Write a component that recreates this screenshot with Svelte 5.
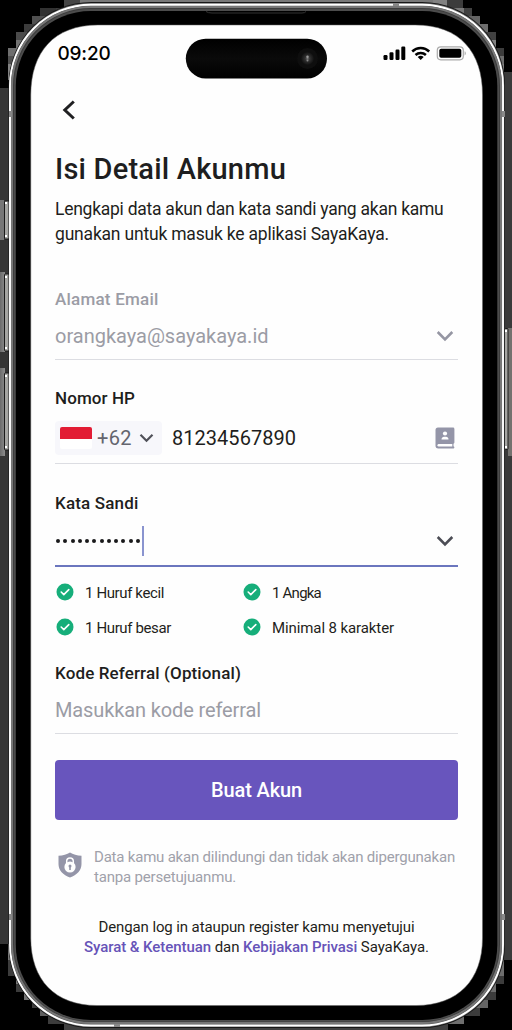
<script>
  // Tracks a line of text so that it fills the given measure.
  function measure(node, width) {
    const natural = node.getBoundingClientRect().width;
    const count = node.textContent.trim().length;
    node.style.letterSpacing = `${(width - natural) / count}px`;
  }

  const rules = [
    { text: '1 Huruf kecil', width: 79 },
    { text: '1 Angka', width: 49 },
    { text: '1 Huruf besar', width: 86 },
    { text: 'Minimal 8 karakter', width: 122 }
  ];

  // Stepped shading around the rounded case: x, y, width, height, grey level.
  const blocks = [
    [64, 0, 384, 8, 120], [56, 8, 16, 8, 60], [40, 8, 16, 8, 50], [64, 0, 16, 8, 70],
    [32, 16, 16, 8, 80], [24, 24, 16, 8, 60], [16, 32, 16, 8, 75], [16, 40, 8, 8, 115],
    [8, 48, 16, 8, 110], [8, 56, 8, 16, 80], [8, 64, 4, 16, 130],
    [433, 0, 14, 8, 130], [447, 0, 16, 8, 60], [448, 8, 16, 8, 120], [464, 8, 8, 8, 65],
    [464, 16, 16, 8, 100], [472, 24, 16, 8, 110], [480, 32, 16, 8, 65], [488, 40, 8, 8, 130],
    [488, 48, 16, 8, 60], [496, 56, 8, 16, 110], [500, 64, 4, 8, 130],
    [0, 88, 14, 856, 53], [500, 72, 12, 888, 58],
    [8, 944, 8, 16, 120], [8, 960, 8, 16, 60], [16, 968, 8, 16, 120], [16, 984, 16, 8, 60],
    [24, 992, 16, 8, 115], [32, 1000, 16, 8, 60], [40, 1008, 16, 8, 95], [48, 1016, 16, 8, 60],
    [64, 1022, 384, 8, 65],
    [496, 960, 8, 16, 110], [496, 976, 8, 8, 60], [488, 976, 8, 16, 110], [480, 992, 16, 8, 60],
    [472, 1000, 16, 8, 100], [464, 1008, 16, 8, 60], [448, 1016, 16, 8, 110]
  ];
</script>

{#snippet chevron(color)}
  <svg class="chevron" width="18" height="12" viewBox="0 0 18 12">
    <path d="M1.7 2 9 9.300l7.300-7.300" fill="none" stroke={color} stroke-width="2.600" />
  </svg>
{/snippet}

<div class="page">
  <svg class="case" width="512" height="1030" viewBox="0 0 512 1030" aria-hidden="true">
    <defs>
      <linearGradient id="key" x1="0" x2="1"><stop offset="0" stop-color="#6b6b6b" /><stop offset="1" stop-color="#8c8c8c" /></linearGradient>
      <linearGradient id="pill" x1="0" x2="0" y1="0" y2="1"><stop offset="0" stop-color="#000" /><stop offset=".5" stop-color="#0a0a0a" /><stop offset="1" stop-color="#000" /></linearGradient>
      <radialGradient id="lens"><stop offset="0" stop-color="#777" /><stop offset=".35" stop-color="#333" /><stop offset="1" stop-color="#101010" /></radialGradient>
    </defs>
    <rect width="512" height="1030" fill="#000" />
    <g shape-rendering="crispEdges">
      {#each blocks as [x, y, w, h, g]}
        <rect {x} {y} width={w} height={h} fill="rgb({g},{g},{g})" />
      {/each}
      <rect x="0" y="200" width="4" height="40" fill="#777" />
      <rect x="0" y="272" width="5" height="80" fill="url(#key)" />
      <rect x="0" y="368" width="5" height="88" fill="url(#key)" />
      <rect x="508" y="328" width="4" height="128" fill="#74726f" />
    </g>
    <g fill="#a5a5a2" stroke="#1b1b1b" stroke-width="1">
      <rect x="4.500" y="201" width="5" height="38" rx="1" />
      <rect x="4.500" y="274" width="5" height="77" rx="1" />
      <rect x="4.500" y="373" width="5" height="77" rx="1" />
      <rect x="504.500" y="328.500" width="3.500" height="121" rx="1" />
    </g>
    <g fill="#fff">
      <rect x="5" y="202" width="2" height="2" /><rect x="5" y="235" width="2" height="2" />
      <rect x="5" y="276" width="2" height="2" /><rect x="5" y="347" width="2" height="2" />
      <rect x="5" y="375" width="2" height="2" /><rect x="5" y="446" width="2" height="2" />
      <rect x="505" y="330" width="2" height="2" /><rect x="505" y="446" width="2" height="2" />
    </g>
    <rect x="8.500" y="2" width="496.500" height="1026" rx="83" fill="#171717" />
    <rect x="9.200" y="3" width="495" height="1024" rx="82" fill="#777" />
    <rect x="10" y="4.800" width="493" height="1020.700" rx="81" fill="#555" stroke="#fff" stroke-width="1.900" />
    <rect x="12" y="7" width="489" height="1016" rx="79" fill="#3c3c3c" stroke="#777" stroke-width="2" />
    <rect x="14" y="9" width="485" height="1012.500" rx="77" fill="#4c4c4c" />
    <rect x="15.800" y="11" width="481.500" height="1009" rx="75" fill="#000" />
    <path d="M206 11.500q2 1.500 6 1.500h90q3 0 4-1.500" fill="none" stroke="#333" />
    <g fill="#888"><rect x="9" y="111" width="3" height="6" /><rect x="502" y="111" width="3" height="6" /><rect x="9" y="914" width="3" height="6" /><rect x="502" y="914" width="3" height="6" /><rect x="393" y="3" width="6" height="3" /><rect x="114" y="1024" width="6" height="3" /></g>
    <path d="M98 25H415C460 25 482.500 52 482.500 95V938C482.500 980 458 1005.500 416 1005.500H97C55 1005.500 30.800 980 30.800 938V95C30.800 52 54 25 98 25Z" fill="#fefefe" stroke="#666" stroke-width=".5" />
    <rect x="185.800" y="38.800" width="141.200" height="39.600" rx="19.800" fill="url(#pill)" />
    <circle cx="307.500" cy="58.500" r="10.500" fill="#0e0e0e" />
    <circle cx="307.500" cy="58.500" r="6.500" fill="url(#lens)" />
    <circle cx="307.500" cy="56.800" r="1.200" fill="#999" /><circle cx="307.500" cy="60.500" r="1" fill="#888" />
  </svg>

  <main>
    <div class="status">
      <span class="time" use:measure={53}>09:20</span>
      <svg width="84" height="18" viewBox="0 0 84 18">
        <g fill="#000">
          <rect x="1.500" y="10" width="4" height="5" rx="1.200" />
          <rect x="7.500" y="7.300" width="4" height="7.700" rx="1.200" />
          <rect x="13.500" y="4.500" width="4" height="10.500" rx="1.200" />
          <rect x="19.300" y="1.500" width="4" height="13.500" rx="1.200" />
          <path d="m38.700 15 3-3a4.600 4.600 0 0 0-6 0z" />
        </g>
        <g fill="none" stroke="#000" stroke-width="2.500"><path d="M30.200 6.500a12.200 12.200 0 0 1 17 0" /><path d="M33.500 10a7.600 7.600 0 0 1 10.400 0" /></g>
        <rect x="55.300" y="1.800" width="26" height="13" rx="3.500" fill="none" stroke="#aaa" stroke-width="1.200" />
        <rect x="57.300" y="3.800" width="22" height="9" rx="1.800" fill="#000" />
        <path d="M82.600 6.200c1.600.7 1.600 3.600 0 4.200z" fill="#aaa" />
      </svg>
    </div>

    <svg class="back" width="16" height="22" viewBox="0 0 16 22"><path d="M12.800 2.500 3.800 11l9 8.500" fill="none" stroke="#202022" stroke-width="3" /></svg>

    <h1><span use:measure={231}>Isi Detail Akunmu</span></h1>
    <p class="intro">
      <span use:measure={388.500}>Lengkapi data akun dan kata sandi yang akan kamu</span>
      <span use:measure={334}>gunakan untuk masuk ke aplikasi SayaKaya.</span>
    </p>

    <section class="field email">
      <div class="label"><span use:measure={103.500}>Alamat Email</span></div>
      <div class="row"><span use:measure={213.500}>orangkaya@sayakaya.id</span>{@render chevron('#9596a3')}</div>
    </section>

    <section class="field phone">
      <div class="label"><span use:measure={80}>Nomor HP</span></div>
      <div class="row">
        <div class="prefix">
          <i class="flag"></i>
          <span use:measure={35}>+62</span>
          <svg width="15" height="10" viewBox="0 0 15 10"><path d="M1.500 1.700 7.500 7.700l6-6" fill="none" stroke="#505159" stroke-width="2.200" /></svg>
        </div>
        <span class="number" use:measure={124}>81234567890</span>
        <svg class="book" width="20" height="22" viewBox="0 0 20 22">
          <path d="M3 .5h15a1.400 1.400 0 0 1 1.400 1.400v13.600a1.300 1.300 0 0 1-.9 1.200v2.600c.5.200.9.500.9 1 0 .8-.6 1.200-1.400 1.200H3.500A2.900 2.900 0 0 1 .5 18.500V3A2.500 2.500 0 0 1 3 .5Z" fill="#9495a8" />
          <path d="M3.700 17h13.600v2.400H3.700a1.200 1.200 0 0 1 0-2.400Z" fill="#fff" />
          <circle cx="10" cy="6.500" r="2.100" fill="#fff" /><path d="M6.500 12.500c0-1.900 1.300-2.800 2.500-2.800h2c1.300 0 2.500.9 2.500 2.800z" fill="#fff" />
        </svg>
      </div>
    </section>

    <section class="field password">
      <div class="label"><span use:measure={83.500}>Kata Sandi</span></div>
      <div class="row">
        <div class="dots">{#each Array(12) as _}<i></i>{/each}<b></b></div>
        {@render chevron('#4c4d55')}
      </div>
    </section>

    <ul>
      {#each rules as rule}
        <li>
          <svg width="18" height="18" viewBox="0 0 18 18"><circle cx="9" cy="9" r="8.500" fill="#16ae7a" /><path d="m5.200 9 2.600 2.600 5-5" fill="none" stroke="#fff" stroke-width="1.600" stroke-linecap="round" stroke-linejoin="round" /></svg>
          <span use:measure={rule.width}>{rule.text}</span>
        </li>
      {/each}
    </ul>

    <section class="field referral">
      <div class="label"><span use:measure={186}>Kode Referral (Optional)</span></div>
      <div class="row"><span use:measure={206}>Masukkan kode referral</span></div>
    </section>

    <button type="button"><span use:measure={91}>Buat Akun</span></button>

    <div class="privacy">
      <svg width="24" height="26" viewBox="0 0 24 26">
        <path d="M12 .5c3 2 7 3 11.500 3.300V12c0 6.500-4.600 11-11.500 13.600C5.100 23 .5 18.500.5 12V3.800C5 3.500 9 2.500 12 .5Z" fill="#9495a8" />
        <circle cx="12" cy="15" r="5.600" fill="#fff" /><path d="M8.700 12V9.200a3.300 3.300 0 0 1 6.600 0V12" fill="none" stroke="#fff" stroke-width="1.500" />
        <circle cx="12" cy="14" r="1.500" fill="#9495a8" /><path d="M11.200 14h1.600v4h-1.600z" fill="#9495a8" />
      </svg>
      <p><span use:measure={361}>Data kamu akan dilindungi dan tidak akan dipergunakan</span><span use:measure={142}>tanpa persetujuanmu.</span></p>
    </div>

    <p class="terms">
      <span use:measure={316}>Dengan log in ataupun register kamu menyetujui</span>
      <span use:measure={345}><strong>Syarat &amp; Ketentuan</strong> dan <strong>Kebijakan Privasi</strong> SayaKaya.</span>
    </p>
  </main>
</div>

<style>
  :global(body) { margin: 0; background: #000; overflow: hidden; }
  .page { position: relative; width: 512px; height: 1030px; overflow: hidden; font-family: Roboto, sans-serif; color: #1e1e20; }
  .case { position: absolute; inset: 0; }
  main { position: relative; box-sizing: border-box; width: 512px; height: 1030px; padding: 39px 54px 0 55px; display: flex; flex-direction: column; }
  span { display: inline-block; white-space: nowrap; }
  h1, p, ul { margin: 0; padding: 0; }
  svg { display: block; flex: none; }
  .status { height: 28px; display: flex; align-items: center; justify-content: space-between; margin: 0 -8px 0 2.500px; color: #000; }
  .status svg { margin-top: 1px; }
  .time { font: 500 19px/28px Inter, sans-serif; padding-top: 1px; }
  .back { margin: 32px 0 0 6px; height: 22px; }
  h1 { margin-top: 30px; height: 36px; font-size: 29px; line-height: 36px; font-weight: 500; }
  .intro { margin-top: 10px; height: 50px; font-size: 17.500px; line-height: 25px; }
  .intro span, .privacy span { display: block; width: max-content; }
  .field { box-sizing: border-box; display: flex; flex-direction: column; border-bottom: 1px solid #dcdde2; }
  .label { height: 20px; line-height: 20px; font-size: 17px; font-weight: 500; }
  .row { flex: 1; display: flex; align-items: center; justify-content: space-between; font-size: 20px; line-height: 28px; }
  .row .chevron { margin-right: 4px; }
  .email { margin-top: 42px; height: 71px; color: #9b9ca5; }
  .email .row { padding-top: 4px; }
  .phone { margin-top: 28px; height: 76px; }
  .phone .row { padding-top: 4px; }
  .prefix { box-sizing: border-box; width: 107px; height: 34px; padding: 0 8px 0 5px; display: flex; align-items: center; background: #f7f7fb; border-radius: 4px; color: #64656e; }
  .prefix span { margin: 0 auto 0 5px; }
  .flag { width: 32px; height: 22px; border-radius: 2px; background: linear-gradient(#e21c34 0 12px, #fff 12px); }
  .number { margin-left: 10px; margin-right: auto; }
  .book { margin-right: 3px; }
  .password { margin-top: 29px; height: 74px; border-bottom: 2px solid #6b76be; }
  .password .row { padding-top: 3px; }
  .dots { display: flex; align-items: center; height: 30px; gap: 3.250px; padding-left: 1px; }
  .dots i { width: 4px; height: 4px; border-radius: 50%; background: #19191b; }
  .dots b { width: 2px; height: 30px; margin-left: -1px; background: #8a94cf; }
  ul { list-style: none; margin-top: 8px; display: grid; grid-template-columns: 187px 1fr; grid-auto-rows: 35px; }
  li { display: flex; align-items: center; gap: 11px; margin-left: 1px; font-size: 15px; line-height: 20px; height: 36px; }
  li svg { position: relative; top: -1px; }
  .referral { margin-top: 18px; height: 71px; }
  .referral .row { color: #9b9ca5; padding-top: 4px; }
  button { margin-top: 26px; flex: none; height: 60px; border: 0; border-radius: 4px; padding: 0; background: #6855bd; color: #fff; font: 500 20px/28px Roboto, sans-serif; }
  .privacy { margin-top: 27px; display: flex; gap: 12px; padding-left: 3px; height: 40px; font-size: 15px; line-height: 20px; color: #a0a1aa; }
  .privacy svg { margin-top: 5px; }
  .terms { margin-top: 30px; display: flex; flex-direction: column; align-items: center; font-size: 15px; line-height: 20px; }
  .terms strong { font-weight: 500; color: #6653b8; }
</style>
